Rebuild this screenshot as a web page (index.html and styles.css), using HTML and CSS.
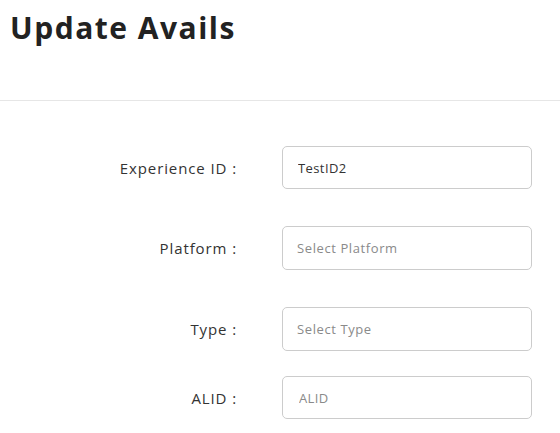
FILE: index.html
```html
<!DOCTYPE html>
<html lang="en">
<head>
  <meta charset="UTF-8">
  <meta name="viewport" content="width=device-width, initial-scale=1.0">
  <link rel="stylesheet" href="styles.css">
</head>
<body>

<div class="page-header">
  <h1 class="page-title">Update Avails</h1>
</div>

<form class="avail-form">
  <div class="form-row">
    <label class="form-label" for="experienceId">Experience ID :</label>
    <input class="form-input" id="experienceId" type="text" value="TestID2">
  </div>

  <div class="form-row">
    <label class="form-label" for="platform">Platform :</label>
    <input class="form-input form-select" id="platform" type="text" placeholder="Select Platform">
  </div>

  <div class="form-row">
    <label class="form-label" for="type">Type :</label>
    <input class="form-input form-select" id="type" type="text" placeholder="Select Type">
  </div>

  <!-- plain text field, sits a bit closer to the selects above -->
  <div class="form-row form-row-tight">
    <label class="form-label" for="alid">ALID :</label>
    <input class="form-input form-input-alid" id="alid" type="text" placeholder="ALID">
  </div>
</form>

</body>
</html>
```

FILE: styles.css
```css
body {
  margin: 0;
  font-family: "Open Sans", Arial, sans-serif;
  background: #fff;
  color: #333;
}

.page-header {
  height: 100px;
  border-bottom: 1px solid #e6e6e6;
  padding-left: 10px;
}

.page-title {
  margin: 0;
  padding-top: 8px;
  font-size: 30px;
  font-weight: 700;
  line-height: 40px;
  letter-spacing: 1.5px;
  color: #222;
}

.avail-form {
  padding-top: 45px;
}

.form-row {
  display: flex;
  align-items: center;
  margin-bottom: 37px;
}

.form-row:last-child {
  margin-bottom: 0;
}

.form-row-tight {
  margin-top: -12px;
}

.form-label {
  width: 237px;
  margin-right: 45px;
  text-align: right;
  font-size: 15px;
  letter-spacing: 0.9px;
  color: #333;
}

.form-input {
  box-sizing: border-box;
  width: 250px;
  height: 43px;
  padding: 0 15px;
  border: 1px solid #ccc;
  border-radius: 5px;
  font-family: "Open Sans", Arial, sans-serif;
  font-size: 13px;
  letter-spacing: 0.4px;
  color: #333;
  outline: none;
}

.form-select {
  height: 44px;
  padding-left: 14px;
  letter-spacing: 0.6px;
}

.form-input::placeholder {
  color: #8a8a8a;
}

.form-input-alid {
  padding-left: 16px;
}
```
